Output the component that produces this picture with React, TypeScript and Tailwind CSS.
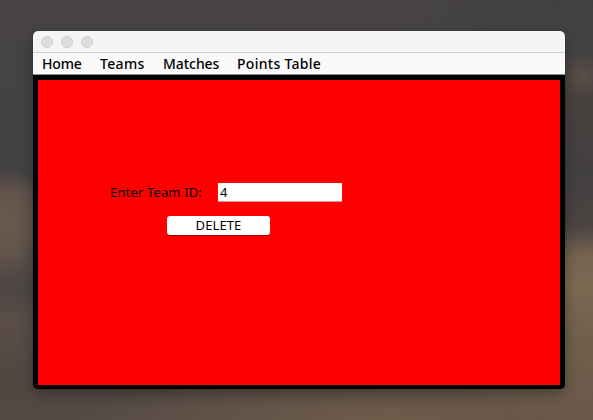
const menu = [
  { label: "Home", cls: "w-[58px] tracking-[-0.2px]" },
  { label: "Teams", cls: "w-[63px] tracking-[0.35px]" },
  { label: "Matches", cls: "w-[74px] tracking-[-0.05px]" },
  { label: "Points Table", cls: "tracking-[0.28px]" },
];

export default function App() {
  return (
    <div className="h-[420px] w-[593px] overflow-hidden bg-[radial-gradient(ellipse_40px_55px_at_4px_222px,#6b5b4e,#6b5b4e00),radial-gradient(ellipse_330px_70px_at_400px_424px,#715e4b,#715e4b00),linear-gradient(to_bottom,#484444_0px,#464343_60px,#434142_172px,#5a4e47_192px,#5b5048_245px,#4d4644_290px,#5a4e46_320px,#514742_380px,#544a46_420px)] pl-[33px] pt-[31px] font-['Noto_Sans','Open_Sans',sans-serif] text-black">
      <div className="relative">
        <div className="absolute -top-[31px] left-[367px] h-[420px] w-[193px] bg-[radial-gradient(ellipse_26px_22px_at_182px_76px,#5b4d47,#5b4d4700),linear-gradient(to_bottom,#424142_0px,#454243_60px,#48423f_100px,#434040_170px,#4b4442_226px,#75644f_256px,#7b6952_285px,#705f4b_340px,#6a594a_420px)] [mask-image:linear-gradient(to_right,transparent,black_160px)]" />
        <div className="relative flex h-[358px] w-[532px] flex-col overflow-hidden rounded-[5px] bg-black shadow-[0_5px_14px_rgba(0,0,0,0.3),0_0_1px_rgba(0,0,0,0.6)]">
          <div className="flex h-[22px] shrink-0 items-center gap-2 border-b border-[#cecece] bg-[#f5f5f5] pl-2">
            <span className="size-3 rounded-full border border-[#cfcfcf] bg-[#dddddd]" />
            <span className="size-3 rounded-full border border-[#cfcfcf] bg-[#dddddd]" />
            <span className="size-3 rounded-full border border-[#cfcfcf] bg-[#dddddd]" />
          </div>
          <nav className="flex h-[22px] shrink-0 items-center border-b border-[#8f8f8f] bg-[#fafafa] pl-[9px] text-[14px] leading-[21px] font-medium">
            {menu.map((m) => (
              <span key={m.label} className={`whitespace-nowrap ${m.cls}`}>{m.label}</span>
            ))}
          </nav>
          <main className="mx-[5px] mt-[5px] h-[305px] bg-[#ff0000] pl-[72px] pt-[103px] text-[13px]">
            <div className="flex h-[19px] items-center">
              <label htmlFor="team" className="w-[108px] whitespace-nowrap tracking-[0.15px]">Enter Team ID:</label>
              <input id="team" defaultValue="4" className="h-[19px] w-[124px] border-b border-[#d8a0a0] bg-white pl-[2px] leading-[18px] outline-none" />
            </div>
            <button className="mt-[14px] ml-[57px] flex h-[19px] w-[103px] items-center justify-center rounded-[3px] bg-white leading-[19px] tracking-[0.1px] shadow-[0_1px_1px_rgba(0,0,0,0.35)]">DELETE</button>
          </main>
        </div>
      </div>
    </div>
  );
}
